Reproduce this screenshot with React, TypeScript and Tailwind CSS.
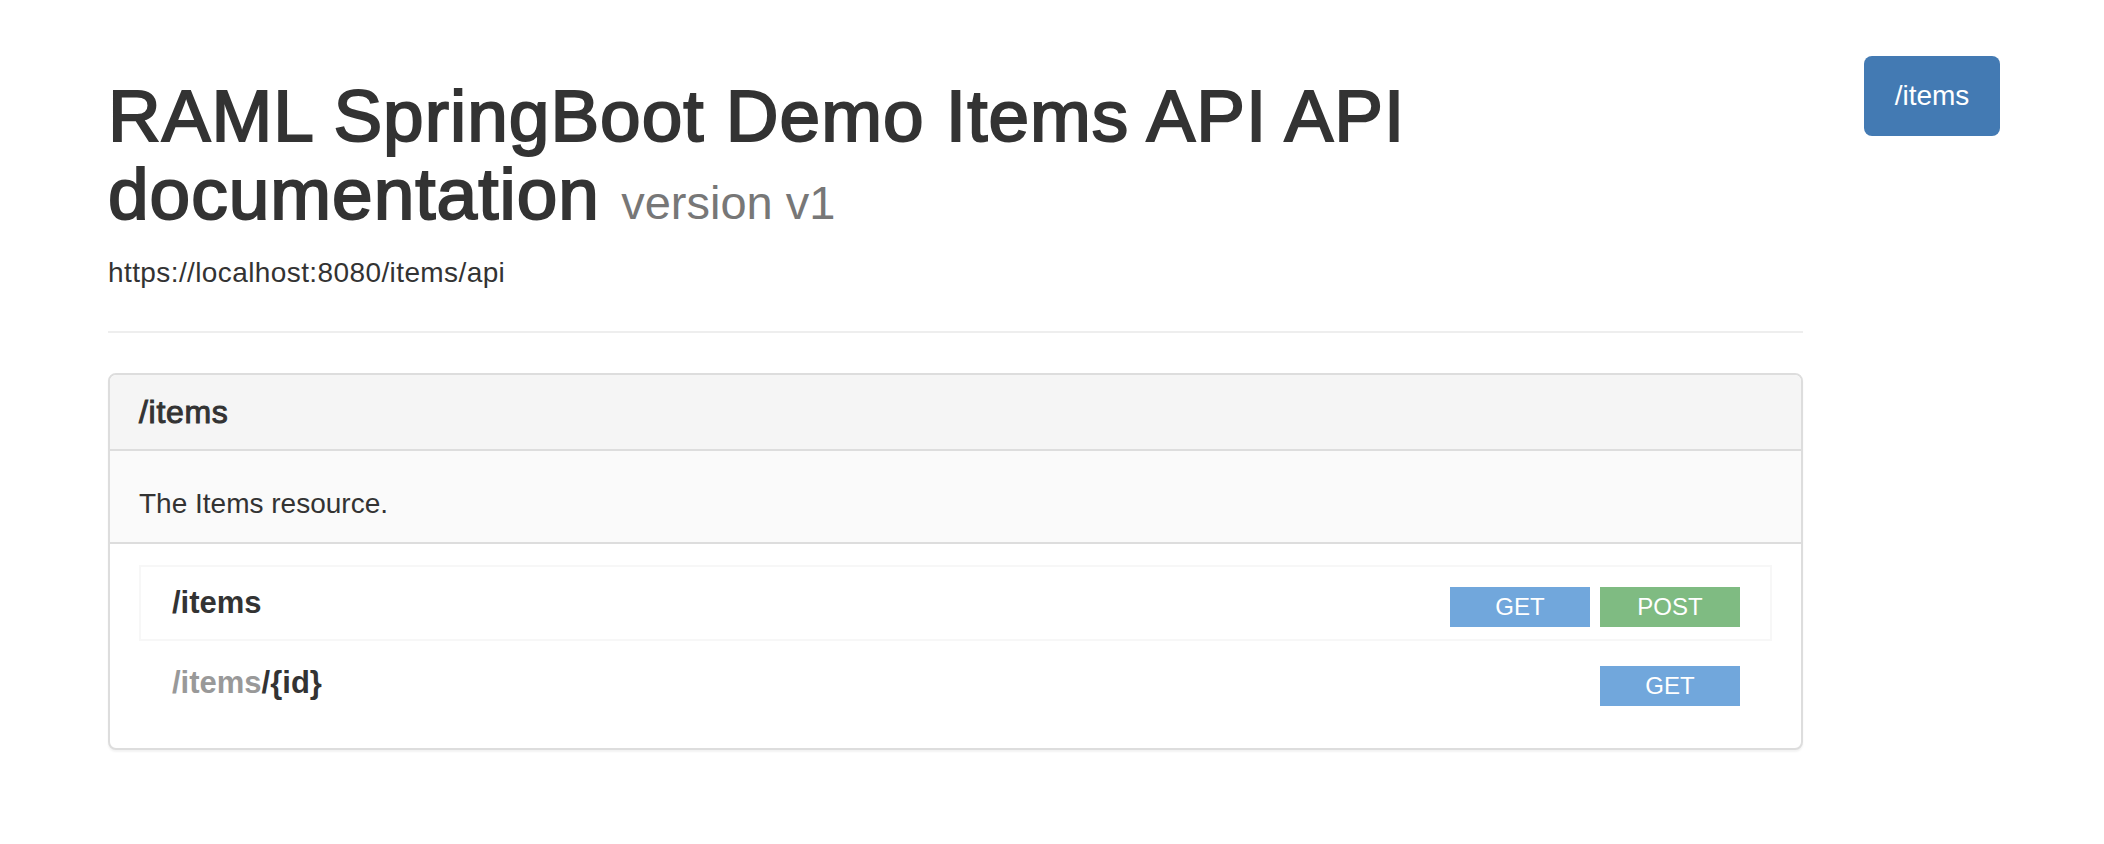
export default function App() {
  return (
    <div className="min-h-screen bg-white font-['Liberation_Sans',Arial,sans-serif] text-[#333]">
      <div className="flex pl-[108px]">
        <main className="w-[1695px] pt-[77px]">
          <h1 className="text-[73px] leading-[78px] tracking-[1px] [-webkit-text-stroke:2px_#333]">
            RAML SpringBoot Demo Items API API documentation{' '}
            <small className="text-[47px] leading-none tracking-normal text-[#777] [-webkit-text-stroke:0]">version v1</small>
          </h1>
          <p className="mt-[20px] text-[28px] leading-[40px] tracking-[0.4px]">https://localhost:8080/items/api</p>
          <hr className="mt-[38px] mb-[40px] border-t-2 border-[#eee]" />

          <div className="rounded-[8px] border-2 border-[#ddd] bg-white shadow-[0_2px_2px_rgba(0,0,0,0.05)] overflow-hidden">
            <div className="h-[76px] flex items-center px-[29px] bg-[#f5f5f5] border-b-2 border-[#ddd]">
              <h3 className="text-[32px] tracking-[0.7px] [-webkit-text-stroke:1px_#333]">/items</h3>
            </div>
            <div className="pt-[33px] pb-[18px] px-[29px] bg-[#fafafa] border-b-2 border-[#ddd]">
              <p className="text-[28px] leading-[40px]">The Items resource.</p>
            </div>

            <div className="pt-[21px] pb-[21px] px-[29px]">
              <div className="h-[76px] flex items-start justify-between pl-[31px] pr-[30px] border-2 border-[#f7f7f7]">
                <span className="pt-[19px] text-[31px] leading-[34px] font-semibold">/items</span>
                <div className="flex gap-[10px] pt-[20px]">
                  <span className="w-[140px] h-[40px] flex items-center justify-center bg-[#71a7dc] text-white text-[24px]">GET</span>
                  <span className="w-[140px] h-[40px] flex items-center justify-center bg-[#7fbb82] text-white text-[24px]">POST</span>
                </div>
              </div>
              <div className="h-[86px] flex items-start justify-between pl-[33px] pr-[32px]">
                <span className="pt-[25px] text-[31px] leading-[34px] font-semibold">
                  <span className="text-[#999]">/items</span>/{'{id}'}
                </span>
                <div className="flex pt-[25px]">
                  <span className="w-[140px] h-[40px] flex items-center justify-center bg-[#71a7dc] text-white text-[24px]">GET</span>
                </div>
              </div>
            </div>
          </div>
        </main>

        <aside className="ml-[61px] pt-[56px]">
          <a className="w-[136px] h-[80px] flex items-center justify-center rounded-[8px] bg-[#437ab3] text-white text-[28px]">
            /items
          </a>
        </aside>
      </div>
    </div>
  );
}
